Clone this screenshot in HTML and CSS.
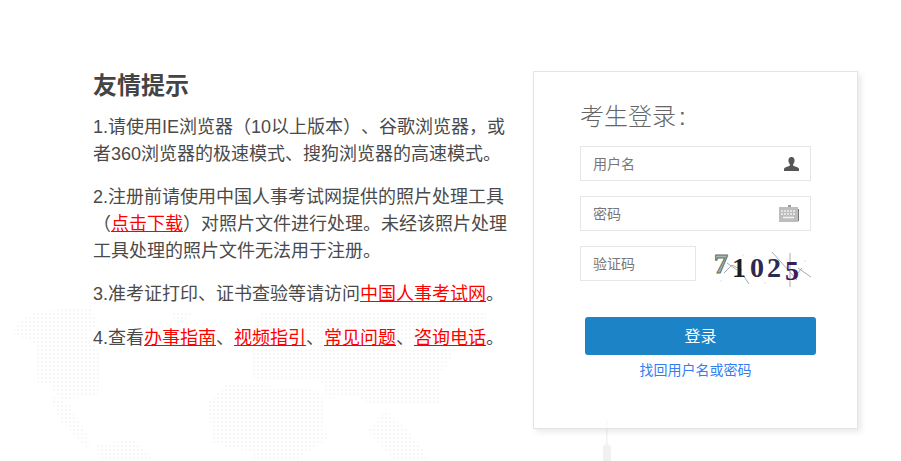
FILE: index.html
```html
<!DOCTYPE html>
<html lang="zh-CN">
<head>
<meta charset="utf-8">
<title>考生登录</title>
<link rel="stylesheet" href="styles.css">
</head>
<body>
<svg class="map" width="901" height="461" viewBox="0 0 901 461" aria-hidden="true">
  <defs>
    <pattern id="dots" width="4" height="4" patternUnits="userSpaceOnUse">
      <rect x="1" y="1" width="2" height="2" fill="#f7f7f7"/>
    </pattern>
  </defs>
  <g fill="url(#dots)">
    <polygon points="14,325 35,312 90,306 98,325 85,335 100,350 98,395 60,400 50,385 38,385 36,345 14,335"/>
    <polygon points="50,395 70,405 92,445 85,447 60,420"/>
    <polygon points="96,444 135,440 174,480 163,500 108,500"/>
    <polygon points="171,313 192,313 180,327"/>
    <polygon points="253,325 261,313 486,313 486,325 461,342 441,374 441,403 367,403 355,395 327,399 322,382 253,378"/>
    <polygon points="208,403 229,382 322,391 327,440 302,456 290,505 257,505 253,452 212,444"/>
    <polygon points="367,431 385,410 410,432 430,460 395,461"/>
    <polygon points="408,456 470,465 506,480 490,500 425,500"/>
  </g>
  <path class="tower" d="M606 419h1.500v25l3.500 2v15h-8v-15l3-2z"/>
</svg>
<main class="page">
  <section class="tips">
    <h2 class="tips-title">友情提示</h2>
    <p class="tip">1.请使用IE浏览器（10以上版本）、谷歌浏览器，或者360浏览器的极速模式、搜狗浏览器的高速模式。</p>
    <p class="tip">2.注册前请使用中国人事考试网提供的照片处理工具（<a class="tip-link" href="#">点击下载</a>）对照片文件进行处理。未经该照片处理工具处理的照片文件无法用于注册。</p>
    <p class="tip tip-wide">3.准考证打印、证书查验等请访问<a class="tip-link" href="#">中国人事考试网</a>。</p>
    <p class="tip">4.查看<a class="tip-link" href="#">办事指南</a>、<a class="tip-link" href="#">视频指引</a>、<a class="tip-link" href="#">常见问题</a>、<a class="tip-link" href="#">咨询电话</a>。</p>
  </section>
  <section class="card">
    <h3 class="card-title">考生登录<span class="colon">:</span></h3>
    <div class="field">
      <span class="placeholder">用户名</span>
      <svg class="icon-user" width="15" height="14" viewBox="0 0 16 15" preserveAspectRatio="none"><path fill="#555" d="M8 0c2.300 0 3.300 1.700 3.300 3.700 0 1.600-.7 3-1.500 3.800v1.800l5 1.900c.7.400 1.200.9 1.200 1.600V15H0v-2.200c0-.7.500-1.200 1.200-1.600l5-1.900V7.500C5.400 6.700 4.700 5.300 4.700 3.700 4.700 1.700 5.700 0 8 0z"/></svg>
    </div>
    <div class="field">
      <span class="placeholder">密码</span>
      <svg class="icon-keys" width="20" height="17" viewBox="0 0 20 17"><rect x="0" y="2" width="19" height="15" fill="#bdbdbd"/><rect x="9" y="0" width="3" height="2" fill="#999"/><rect x="19" y="4" width="1" height="12" fill="#777"/><path stroke="#f0f0f0" stroke-width="1.500" stroke-dasharray="2 1" d="M2 6h15M2 9h15"/><path stroke="#f0f0f0" stroke-width="1.500" d="M4 12.500h11"/></svg>
    </div>
    <div class="captcha-row">
      <div class="field field-code"><span class="placeholder">验证码</span></div>
      <svg class="captcha" width="99" height="42" viewBox="0 0 99 42">
        <g stroke="#aaa" fill="none">
          <path d="M15 17l10 7M12 27l8-8 10 5M31 29l6 9M60 6l25 28M78 7v34M86 22l13 9M80 34l10-12"/>
        </g>
        <g fill="#f1f1f1">
          <rect x="30" y="8" width="2" height="2"/><rect x="42" y="10" width="2" height="2"/><rect x="58" y="12" width="2" height="2"/><rect x="8" y="34" width="2" height="2"/><rect x="52" y="36" width="2" height="2"/><rect x="92" y="14" width="2" height="2"/>
        </g>
        <text class="cap cap-7" x="2" y="27">7</text>
        <text class="cap cap-1" x="20" y="31">1</text>
        <text class="cap cap-0" x="38" y="31">0</text>
        <text class="cap cap-2" x="55" y="31">2</text>
        <text class="cap cap-5" x="73" y="34">5</text>
      </svg>
    </div>
    <button class="login" type="button">登录</button>
    <a class="forgot" href="#">找回用户名或密码</a>
  </section>
</main>
</body>
</html>
```
FILE: styles.css
```css
* { box-sizing: border-box; }
html, body { margin: 0; height: 100%; }
body {
  position: relative;
  overflow: hidden;
  background: #fff;
  color: #4a4a4a;
  font-family: "Liberation Sans", "Noto Sans CJK SC", sans-serif;
  text-spacing-trim: space-all;
}
.map { position: absolute; left: 0; top: 0; }
.tower { fill: #f1f1f1; }
.page {
  position: relative;
  display: flex;
  align-items: flex-start;
  gap: 25px;
  padding: 71px 0 0 93px;
}
.tips { width: 415px; }
.tips-title {
  margin: 0 0 14px;
  font-size: 24px;
  line-height: 29px;
  font-weight: 700;
  color: #444;
}
.tip {
  margin: 0 0 16px;
  font-size: 18px;
  line-height: 27px;
  color: #4a4a4a;
}
.tip-wide { margin-bottom: 17px; }
.tip-link { color: #f00; text-decoration: underline; }
.card {
  display: flex;
  flex-direction: column;
  width: 325px;
  height: 358px;
  padding: 27px 46px 0;
  background: rgba(255,255,255,.6);
  border: 1px solid #e4e4e4;
  box-shadow: 3px 3px 6px rgba(0,0,0,.09);
}
.card-title {
  margin: 0 0 11px;
  font-size: 24px;
  line-height: 36px;
  font-weight: 300;
  color: #666;
}
.colon { margin-left: 3px; }
.field {
  display: flex;
  align-items: center;
  justify-content: space-between;
  height: 35px;
  margin-bottom: 15px;
  padding: 0 11px 0 12px;
  border: 1px solid #e6e6e6;
  background: #fff;
}
.placeholder { margin-top: -2px; font-size: 14px; color: #777; }
.captcha-row { display: flex; gap: 16px; align-items: flex-start; }
.field-code { flex: none; width: 116px; margin-bottom: 0; }
.captcha { display: block; flex: none; }
.cap { font-family: "Liberation Serif", serif; font-size: 28px; font-weight: 700; letter-spacing: 0; }
.cap-7 { fill: #a9b5ae; stroke: #5f736a; stroke-width: 1; }
.cap-1 { fill: #1c1c24; }
.cap-0 { fill: #2c2a4e; }
.cap-2 { fill: #2a2a52; }
.cap-5 { fill: #3c1a5c; }
.login {
  width: 231px;
  height: 38px;
  margin: 29px 0 0 5px;
  padding: 0 0 3px;
  border: 0;
  border-radius: 3px;
  background: #1c84c6;
  color: #fff;
  font: 16px "Liberation Sans", "Noto Sans CJK SC", sans-serif;
}
.forgot {
  margin: 5px 0 0;
  text-align: center;
  font-size: 14px;
  line-height: 20px;
  color: #337ef0;
  text-decoration: none;
}
```
